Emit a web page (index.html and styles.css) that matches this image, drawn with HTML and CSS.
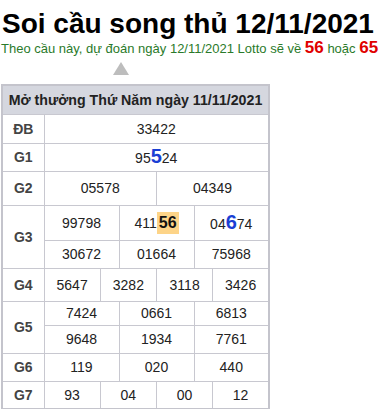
FILE: index.html
```html
<!DOCTYPE html>
<html lang="vi">
<head>
<meta charset="utf-8">
<link rel="stylesheet" href="styles.css">
</head>
<body>
<h1 class="title">Soi cầu song thủ 12/11/2021</h1>
<p class="sub">Theo cầu này, dự đoán ngày 12/11/2021 Lotto sẽ về <b class="hot">56</b> hoặc <b class="hot">65</b></p>
<div class="arrow"></div>
<table class="kq">
  <colgroup>
    <col class="c-lab">
    <col><col><col><col><col><col><col><col><col><col><col><col>
  </colgroup>
  <tr class="r29"><th colspan="13" class="head">Mở thưởng Thứ Năm ngày 11/11/2021</th></tr>
  <tr class="r29"><td class="lab">ĐB</td><td colspan="12">33422</td></tr>
  <tr class="r28"><td class="lab">G1</td><td colspan="12">95<b class="big">5</b>24</td></tr>
  <tr class="r34"><td class="lab">G2</td><td colspan="6">05578</td><td colspan="6">04349</td></tr>
  <tr class="r35"><td class="lab" rowspan="2">G3</td><td colspan="4">99798</td><td colspan="4">411<b class="mark">56</b></td><td colspan="4">04<b class="big">6</b>74</td></tr>
  <tr class="r28"><td colspan="4">30672</td><td colspan="4">01664</td><td colspan="4">75968</td></tr>
  <tr class="r33"><td class="lab">G4</td><td colspan="3">5647</td><td colspan="3">3282</td><td colspan="3">3118</td><td colspan="3">3426</td></tr>
  <tr class="r24"><td class="lab" rowspan="2">G5</td><td colspan="4">7424</td><td colspan="4">0661</td><td colspan="4">6813</td></tr>
  <tr class="r28"><td colspan="4">9648</td><td colspan="4">1934</td><td colspan="4">7761</td></tr>
  <tr class="r28"><td class="lab">G6</td><td colspan="4">119</td><td colspan="4">020</td><td colspan="4">440</td></tr>
  <tr class="r28"><td class="lab">G7</td><td colspan="3">93</td><td colspan="3">04</td><td colspan="3">00</td><td colspan="3">12</td></tr>
</table>
</body>
</html>
```
FILE: styles.css
```css
html, body {
  margin: 0;
  padding: 0;
  background: #fff;
}
body {
  padding: 0 1px;
  font-family: "Liberation Sans", Arial, sans-serif;
  color: #222;
}
.title {
  margin: 8px 0 0 1px;
  font-size: 28px;
  line-height: 32px;
  font-weight: bold;
  color: #000;
}
.sub {
  margin: 0;
  font-size: 13px;
  line-height: 16px;
  color: #2a7a2a;
  white-space: nowrap;
}
.hot {
  color: #e00000;
  font-size: 17px;
}
.arrow {
  width: 0;
  height: 0;
  margin: 5px 0 0 112px;
  border-left: 8px solid transparent;
  border-right: 8px solid transparent;
  border-bottom: 13px solid #bdbdbd;
}
.kq {
  margin-top: 9px;
  width: 269px;
  border-collapse: collapse;
  table-layout: fixed;
  border: 2px solid #c4c4cc;
}
.c-lab { width: 42px; }
.kq th, .kq td {
  border: 1px solid #c8c8d0;
  padding: 0 1px;
  text-align: center;
  font-size: 14px;
  line-height: 18px;
  white-space: nowrap;
}
.kq .head {
  background: #d5d7df;
  font-weight: bold;
  font-size: 14.2px;
  color: #222;
}
.kq .lab {
  font-weight: bold;
  font-size: 14px;
  color: #444;
}
.r24 { height: 24px; }
.r28 { height: 28px; }
.r29 { height: 29px; }
.r33 { height: 33px; }
.r34 { height: 34px; }
.r35 { height: 35px; }
.big {
  color: #1a3fd4;
  font-size: 20px;
}
.mark {
  display: inline-block;
  background: #fdd488;
  color: #111;
  font-size: 16px;
  line-height: 22px;
  padding: 0 2px;
}
```
